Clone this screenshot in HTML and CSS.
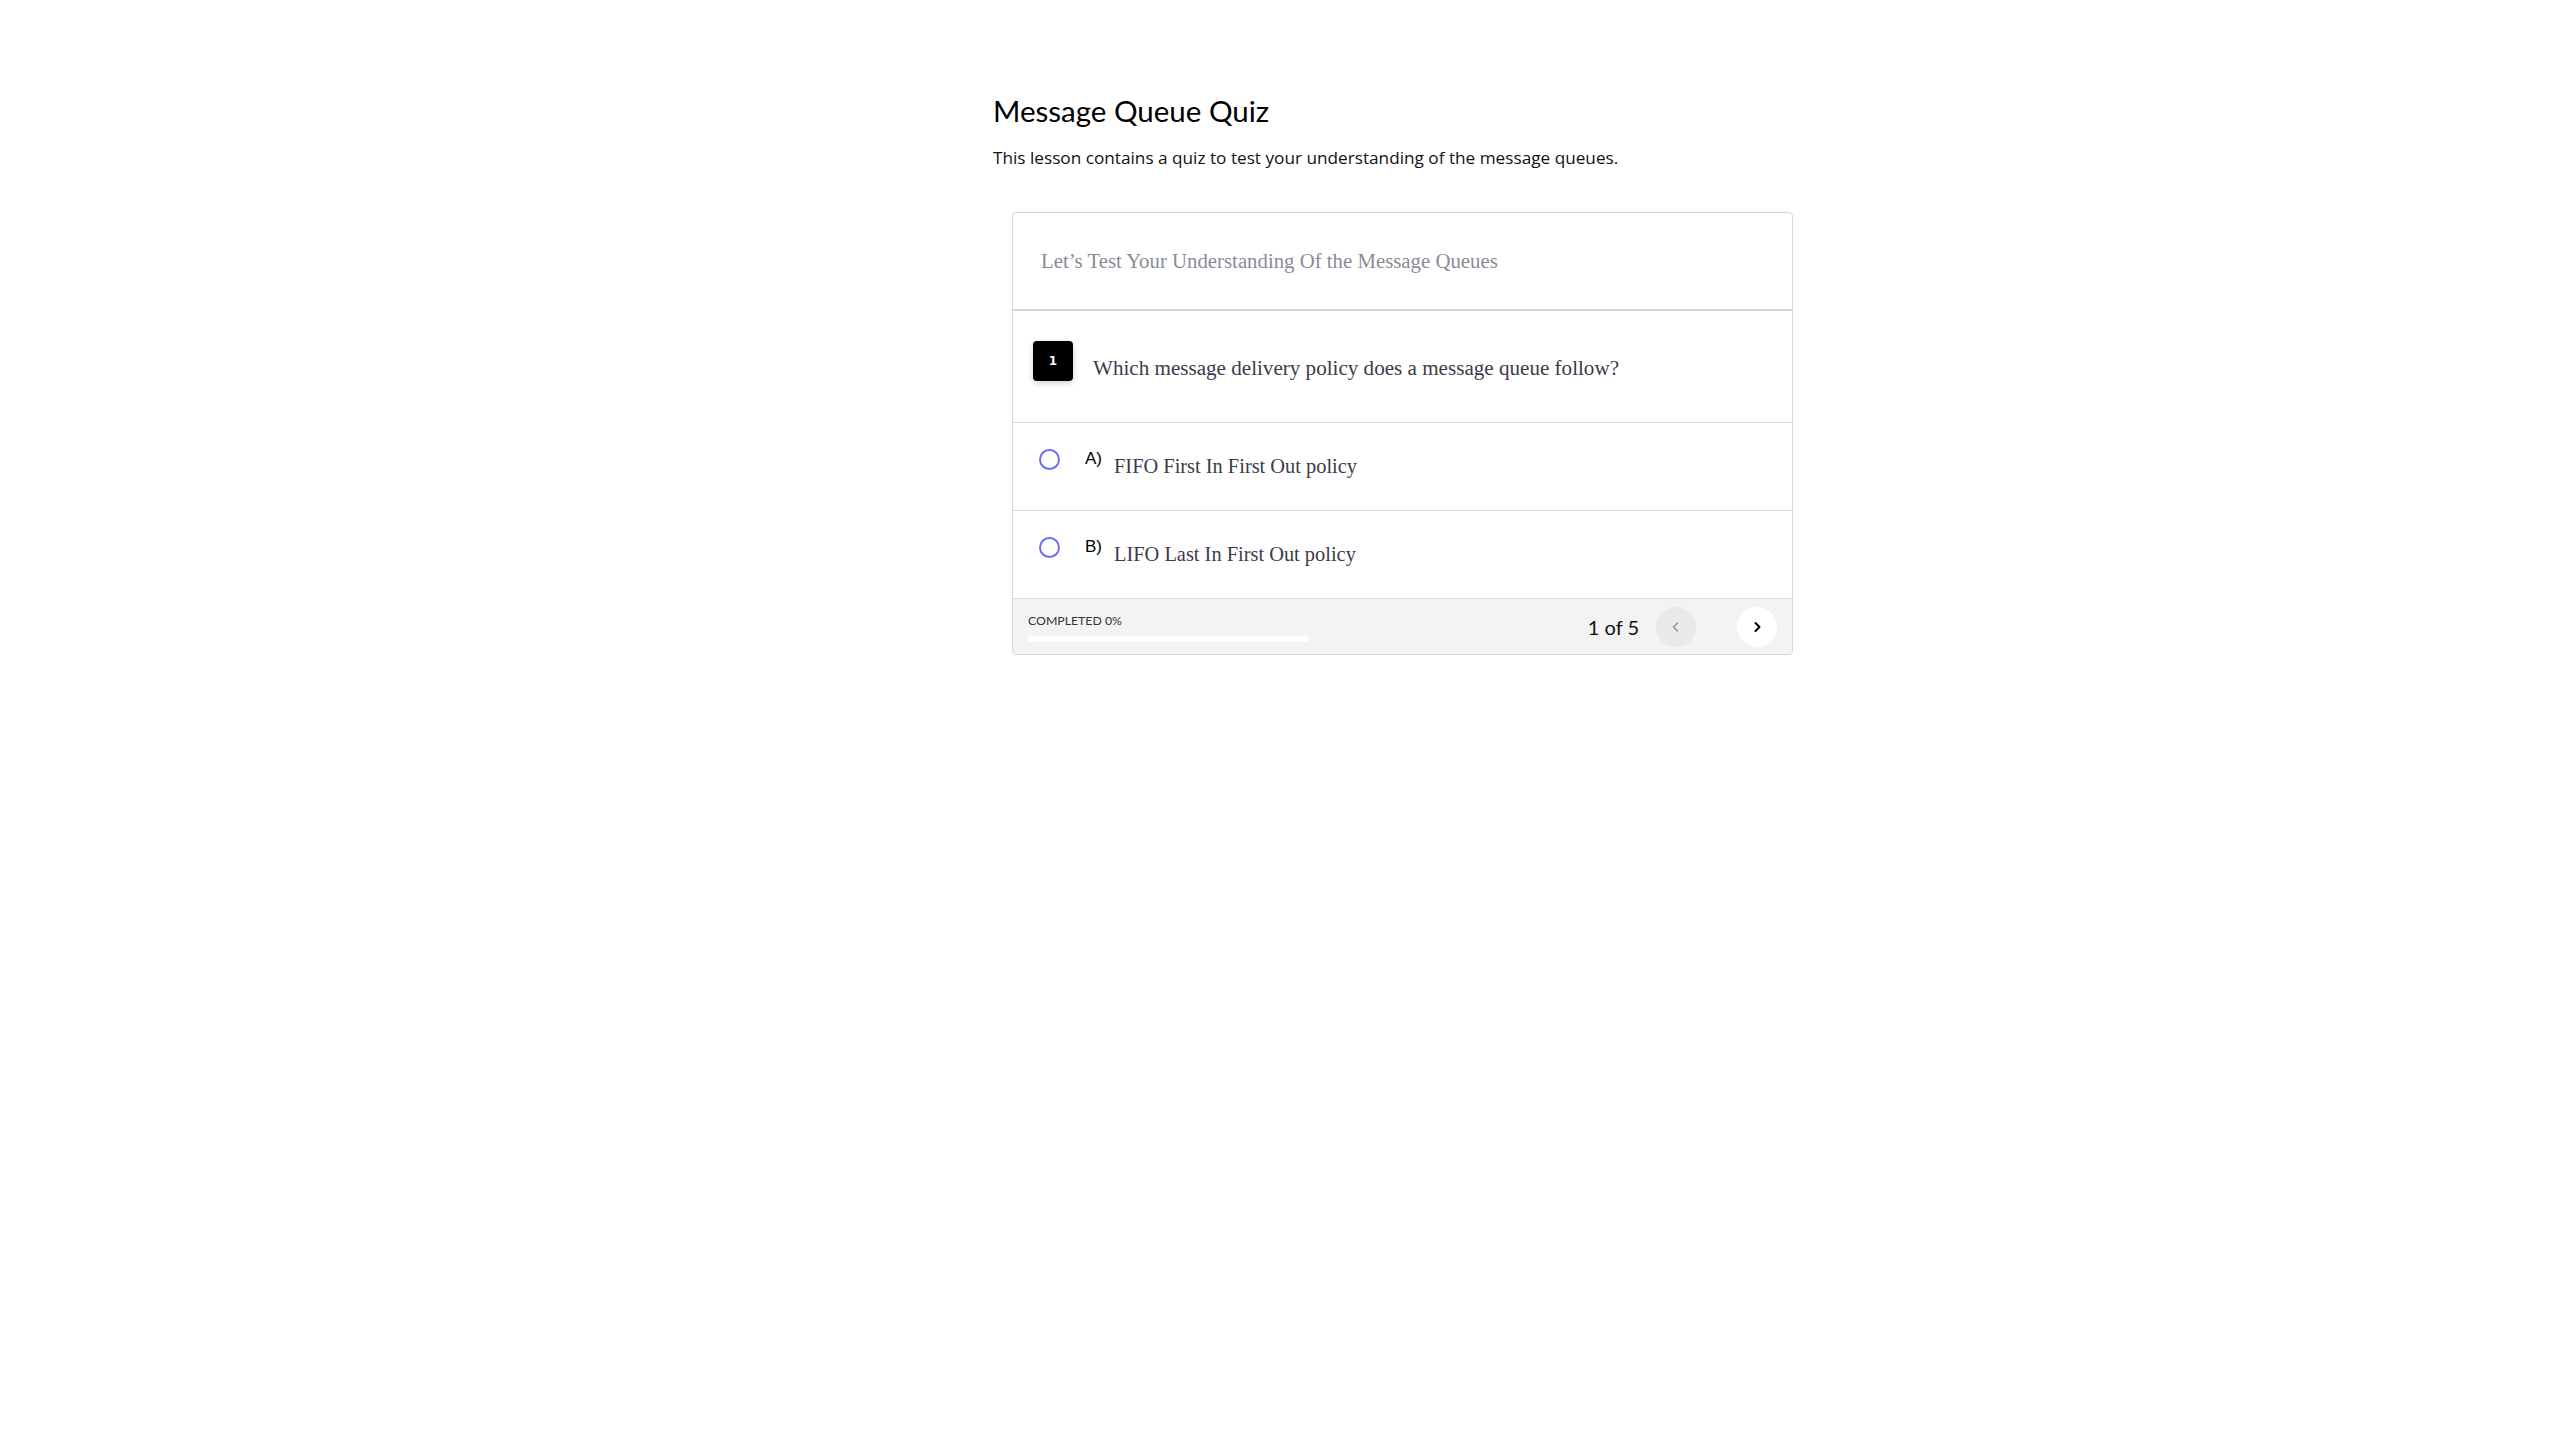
FILE: index.html
```html
<!DOCTYPE html>
<html lang="en">
<head>
<meta charset="utf-8">
<title>Message Queue Quiz</title>
<link rel="stylesheet" href="styles.css">
</head>
<body>
<main class="page">
  <h1 class="title">Message Queue Quiz</h1>
  <p class="subtitle">This lesson contains a quiz to test your understanding of the message queues.</p>
  <section class="quiz">
    <header class="quiz-head">Let’s Test Your Understanding Of the Message Queues</header>
    <div class="question">
      <span class="badge">1</span>
      <span class="q-text">Which message delivery policy does a message queue follow?</span>
    </div>
    <label class="option">
      <span class="radio"></span>
      <span class="opt-key">A)</span>
      <span class="opt-text">FIFO First In First Out policy</span>
    </label>
    <label class="option">
      <span class="radio"></span>
      <span class="opt-key">B)</span>
      <span class="opt-text">LIFO Last In First Out policy</span>
    </label>
    <footer class="quiz-foot">
      <div class="progress">
        <span class="progress-label">COMPLETED 0%</span>
        <span class="progress-bar"></span>
      </div>
      <div class="pager">
        <span class="count">1 of 5</span>
        <button class="nav nav-prev" aria-label="Previous">
          <svg width="14" height="14" viewBox="0 0 14 14"><path d="M8.5 3 L4.5 7 L8.5 11" fill="none" stroke="#8d8d95" stroke-width="1.4" stroke-linecap="round" stroke-linejoin="round"/></svg>
        </button>
        <button class="nav nav-next" aria-label="Next">
          <svg width="14" height="14" viewBox="0 0 14 14"><path d="M5.5 3 L9.5 7 L5.5 11" fill="none" stroke="#000" stroke-width="2" stroke-linecap="round" stroke-linejoin="round"/></svg>
        </button>
      </div>
    </footer>
  </section>
</main>
</body>
</html>
```
FILE: styles.css
```css
* { box-sizing: border-box; }
html, body { margin: 0; padding: 0; background: #fff; }
body { font-family: "Lato", "Open Sans", sans-serif; color: #000; }

.page {
  margin-left: 993px;
  padding-top: 93px;
  width: 820px;
}
.title {
  margin: 0;
  font-size: 29.5px;
  line-height: 36px;
  font-weight: 400;
  color: #000;
}
.subtitle {
  margin: 17px 0 0;
  font-family: "Open Sans", sans-serif;
  font-size: 17.2px;
  line-height: 24px;
  color: #111;
}

.quiz {
  margin: 42px 0 0 19px;
  width: 781px;
  border: 1px solid #d6d6db;
  border-radius: 4px;
  overflow: hidden;
  font-family: "Liberation Serif", serif;
}
.quiz-head {
  height: 98px;
  display: flex;
  align-items: center;
  padding: 0 28px;
  font-size: 20.8px;
  color: #8b8b96;
  border-bottom: 2px solid #d4d4d9;
}
.question {
  display: flex;
  align-items: flex-start;
  gap: 20px;
  padding: 30px 20px 0;
  height: 112px;
  border-bottom: 1px solid #d9d9de;
}
.badge {
  flex: none;
  width: 40px;
  height: 40px;
  border-radius: 4px;
  background: #000;
  color: #fff;
  display: flex;
  align-items: center;
  justify-content: center;
  font-family: "DejaVu Sans", sans-serif;
  font-weight: 700;
  font-size: 12px;
  box-shadow: 0 2px 6px rgba(0,0,0,0.18);
}
.q-text {
  margin-top: 13px;
  font-size: 21.1px;
  line-height: 28px;
  color: #3b3b4a;
}
.option {
  display: flex;
  align-items: flex-start;
  height: 88px;
  padding: 26px 0 0 26px;
  border-bottom: 1px solid #d9d9de;
}
.radio {
  flex: none;
  width: 21px;
  height: 21px;
  border-radius: 50%;
  border: 2px solid #6c6cf7;
}
.opt-key {
  margin-left: 25px;
  font-family: "Liberation Sans", Arial, sans-serif;
  font-size: 17px;
  line-height: 20px;
  color: #000;
}
.opt-text {
  margin-left: 12px;
  margin-top: 4px;
  font-size: 20.4px;
  line-height: 26px;
  color: #3b3b4a;
}
.quiz-foot {
  height: 55px;
  background: #f3f3f3;
  display: flex;
  align-items: center;
  justify-content: space-between;
  padding: 0 15px;
  font-family: "Lato", sans-serif;
}
.progress {
  display: flex;
  flex-direction: column;
  gap: 8px;
  margin-top: 2px;
}
.progress-label {
  font-size: 12.3px;
  line-height: 14px;
  color: #333;
}
.progress-bar {
  display: block;
  width: 281px;
  height: 6px;
  border-radius: 3px;
  background: #fff;
}
.pager {
  display: flex;
  align-items: center;
}
.count {
  font-size: 20px;
  color: #111;
  margin-right: 17px;
}
.nav {
  width: 40px;
  height: 40px;
  border-radius: 50%;
  border: 0;
  padding: 0;
  display: flex;
  align-items: center;
  justify-content: center;
}
.nav-prev { background: #e9e9eb; margin-right: 41px; }
.nav-next { background: #fff; }
```
